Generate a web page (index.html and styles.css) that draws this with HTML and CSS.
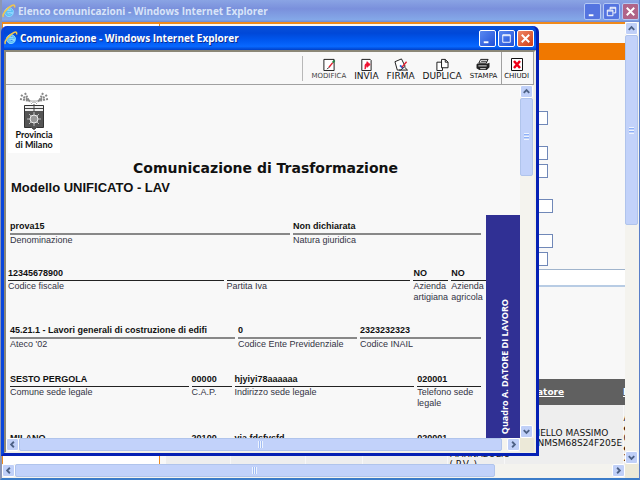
FILE: index.html
```
<!DOCTYPE html>
<html lang="it">

<head>
  <meta charset="utf-8">
  <title>Elenco comunicazioni</title>
  <link rel="stylesheet" href="styles.css">
</head>

<body>

  <!-- icone condivise -->
  <svg class="defs" width="0" height="0">
    <symbol id="ie" viewBox="0 0 14 14">
      <path d="M11.500 8.500H5.500a2 2 0 0 0 3.500 1h2.300A4.500 4.500 0 1 1 11.500 8.500M5.500 6.500h3.500a1.800 1.800 0 0 0-3.500 0" fill="#5cc0f5" stroke="#8ad6ff" stroke-width="1" fill-rule="evenodd"/>
      <path d="M1.500 13C-.5 11 5 3.500 10 1.500c2.500-1 3 0 2.500 2" fill="none" stroke="#f2c64a" stroke-width="1.500"/>
    </symbol>
    <symbol id="min" viewBox="0 0 16 16"><path d="M4 11h5v2H4z" fill="#fff"/></symbol>
    <symbol id="max" viewBox="0 0 16 16"><path d="M4 4h8v8H4zM4 5h8" fill="none" stroke="#fff"/></symbol>
    <symbol id="restore" viewBox="0 0 16 16"><path d="M6.500 6V3.500h6v6H10M6.500 4.500h6M3.500 6.500h6v6h-6zM3.500 7.500h6" fill="none" stroke="#fff"/></symbol>
    <symbol id="close" viewBox="0 0 16 16"><path d="M4 4l8 8M12 4l-8 8" stroke="#fff" stroke-width="2" fill="none"/></symbol>
    <symbol id="arrow" viewBox="0 0 12 12"><path d="M3 7.500l3-3 3 3" fill="none" stroke="#4d6185" stroke-width="2"/></symbol>
  </svg>

  <!-- finestra dietro -->
  <div class="window back">
    <div class="titlebar">
      <svg class="ie"><use href="#ie"/></svg>
      <span class="title">Elenco comunicazioni - Windows Internet Explorer</span>
      <button aria-label="Riduci"><svg><use href="#min"/></svg></button>
      <button aria-label="Ripristina"><svg><use href="#restore"/></svg></button>
      <button class="close" aria-label="Chiudi"><svg><use href="#close"/></svg></button>
    </div>
    <div class="scroller">
      <div class="view elenco">
        <div class="menu"></div>
        <div class="main">
          <div class="banda"></div>
          <form class="filtri">
            <div class="gruppo"><input type="text" aria-label="Codice"></div>
            <div class="gruppo">
              <input type="text" aria-label="Dal">
              <input type="text" aria-label="Al">
            </div>
            <div class="gruppo"><input class="lungo" type="text" aria-label="Nome"></div>
            <div class="gruppo">
              <input class="lungo" type="text" aria-label="Cognome">
              <input type="text" aria-label="Data">
            </div>
          </form>
          <div class="striscia"></div>
          <table>
            <tr>
              <th class="c1"></th>
              <th class="c2"></th>
              <th class="c3"></th>
              <th class="c4"></th>
              <th class="c5"></th>
              <th class="c6"><a href="#">atore</a></th>
              <th><a href="#">D</a></th>
            </tr>
            <tr>
              <td></td>
              <td></td>
              <td></td>
              <td></td>
              <td class="comune">MARNABOLIO<br>( P.V. )</td>
              <td class="lavoratore">IELLO MASSIMO<br>NMSM68S24F205E</td>
              <td class="date">A<br><b>e</b><br>0<br><b>e</b><br>2</td>
            </tr>
          </table>
        </div>
      </div>
      <div class="vbar">
        <button aria-label="Su"><svg><use href="#arrow"/></svg></button>
        <div class="thumb"><i></i></div>
        <button class="down" aria-label="Giù"><svg><use href="#arrow"/></svg></button>
      </div>
      <div class="hbar">
        <button class="left" aria-label="Sinistra"><svg><use href="#arrow"/></svg></button>
        <div class="thumb"><i></i></div>
        <button class="right" aria-label="Destra"><svg><use href="#arrow"/></svg></button>
      </div>
    </div>
  </div>

  <!-- finestra davanti -->
  <div class="window front">
    <div class="titlebar">
      <svg class="ie"><use href="#ie"/></svg>
      <span class="title">Comunicazione - Windows Internet Explorer</span>
      <button aria-label="Riduci"><svg><use href="#min"/></svg></button>
      <button aria-label="Ingrandisci"><svg><use href="#max"/></svg></button>
      <button class="close" aria-label="Chiudi"><svg><use href="#close"/></svg></button>
    </div>
    <div class="corpo">
      <div class="toolbar">
        <div class="azioni">
          <button class="scuro">
            <svg viewBox="0 0 16 14"><path d="M2.500 1.500h11v12h-11z" fill="#fff" stroke="#111"/><path d="M8 10l4-5" stroke="#e02030" stroke-width="1.500"/><path d="M12 5l2-2.500" stroke="#208040" stroke-width="2"/><path d="M6 12l2-2" stroke="#111"/></svg>
            MODIFICA
          </button>
          <button class="largo">
            <svg viewBox="0 0 16 14"><path d="M3.500 1.500h9l1 1v11h-10z" fill="#fff" stroke="#111"/><path d="M7 12V8q0-2 2-2V4l3.500 3L9 10V8q-1 0-1 1z" fill="#f01030" stroke="#f01030"/></svg>
            INVIA
          </button>
          <button class="largo">
            <svg viewBox="0 0 16 14"><path d="M1.500 4l7-3 4 8-5 4H4z" fill="#fff" stroke="#111"/><path d="M7 8l3 3" stroke="#2060d0" stroke-width="2"/><path d="M9 10l5-6" stroke="#e02030" stroke-width="1.500"/><path d="M6 13h9l-3-3" fill="none" stroke="#111"/></svg>
            FIRMA
          </button>
          <button class="largo">
            <svg viewBox="0 0 16 14"><path d="M2.500 4.500h6v9h-6z" fill="#fff" stroke="#111"/><path d="M7.500 1.500h4l3 3v6h-7z" fill="#fff" stroke="#111"/><path d="M11.500 1.500v3h3" fill="none" stroke="#111"/></svg>
            DUPLICA
          </button>
          <button>
            <svg viewBox="0 0 16 14"><path d="M5.500 1.500h8l-2 4h-8z" fill="#fff" stroke="#111"/><path d="M6 3.500h6" stroke="#111"/><path d="M2 6h11l2-1v5l-3 3H4L1 11V7z" fill="#222"/><path d="M3 8.500h9M5 11.500h6" stroke="#eee"/></svg>
            STAMPA
          </button>
        </div>
        <button class="chiudi">
          <svg viewBox="0 0 16 14"><path d="M2.500 1.500h11v12h-11z" fill="#fff" stroke="#111"/><path d="M5 4l6 7M11 4l-6 7" stroke="#f00018" stroke-width="2.500"/></svg>
          CHIUDI
        </button>
      </div>
      <div class="scroller">
        <div class="view documento">
          <div class="logo">
            <svg viewBox="0 0 32 38">
              <path d="M3 3l10 7M7 1l4 8M2 7l10 2M29 3l-10 7M25 1l-4 8M30 7l-10 2" stroke="#888" stroke-width="2" stroke-dasharray="2 1"/>
              <path d="M12 9h8M13 12q3-4 6 0" fill="none" stroke="#aaa"/>
              <path d="M6.500 13.500h19v22h-7l-2.500 2-2.500-2h-7z" fill="#555" stroke="#333"/>
              <path d="M7 14h18v5H7z" fill="#eee"/>
              <path d="M7 16.500h18M16 12v7" stroke="#444"/>
              <path d="M16 20v14M9 27h14M11 22l10 10M21 22l-10 10" stroke="#bbb"/>
              <circle cx="16" cy="27" r="4" fill="#999" stroke="#eee"/>
            </svg>
            Provincia<br>di Milano
          </div>
          <h1>Comunicazione di Trasformazione</h1>
          <h2>Modello UNIFICATO - LAV</h2>
          <div class="quadro">
            <div class="campi">
              <dl class="riga r1 grigia">
                <div><dt>Denominazione</dt><dd>prova15</dd></div>
                <div><dt>Natura giuridica</dt><dd>Non dichiarata</dd></div>
              </dl>
              <dl class="riga r2">
                <div><dt>Codice fiscale</dt><dd>12345678900</dd></div>
                <div><dt>Partita Iva</dt><dd></dd></div>
                <div><dt>Azienda artigiana</dt><dd>NO</dd></div>
                <div><dt>Azienda agricola</dt><dd>NO</dd></div>
              </dl>
              <dl class="riga r3 grigia">
                <div><dt>Ateco '02</dt><dd>45.21.1 - Lavori generali di costruzione di edifi</dd></div>
                <div><dt>Codice Ente Previdenziale</dt><dd>0</dd></div>
                <div><dt>Codice INAIL</dt><dd>2323232323</dd></div>
              </dl>
              <dl class="riga r4">
                <div><dt>Comune sede legale</dt><dd>SESTO PERGOLA</dd></div>
                <div><dt>C.A.P.</dt><dd>00000</dd></div>
                <div><dt>Indirizzo sede legale</dt><dd>hjyiyi78aaaaaa</dd></div>
                <div><dt>Telefono sede legale</dt><dd>020001</dd></div>
              </dl>
              <dl class="riga r4">
                <div><dt>Comune</dt><dd>MILANO</dd></div>
                <div><dt>C.A.P.</dt><dd>20100</dd></div>
                <div><dt>Indirizzo</dt><dd>via fdsfvsfd</dd></div>
                <div><dt>Telefono</dt><dd>020001</dd></div>
              </dl>
            </div>
            <div class="linguetta"><span>Quadro A. DATORE DI LAVORO</span></div>
          </div>
        </div>
        <div class="vbar">
          <button aria-label="Su"><svg><use href="#arrow"/></svg></button>
          <div class="thumb"><i></i></div>
          <button class="down" aria-label="Giù"><svg><use href="#arrow"/></svg></button>
        </div>
        <div class="hbar">
          <button class="left" aria-label="Sinistra"><svg><use href="#arrow"/></svg></button>
          <div class="thumb"><i></i></div>
          <button class="right" aria-label="Destra"><svg><use href="#arrow"/></svg></button>
        </div>
      </div>
    </div>
  </div>

</body>

</html>
```
FILE: styles.css
```
* {
  box-sizing: border-box;
}

body {
  margin: 0;
  height: 100vh;
  position: relative;
  overflow: hidden;
  font-family: "Liberation Sans", Arial, sans-serif;
  color: #111;
}

button {
  padding: 0;
  border: none;
  background: none;
  font: inherit;
  color: inherit;
}

svg {
  display: block;
}

.defs {
  position: absolute;
}

/* finestre */
.window {
  display: flex;
  flex-direction: column;
}

.back {
  height: 100%;
  border-left: 2px solid #8c96b4;
  border-right: 1px solid #5a7fc8;
  border-bottom: 2px solid #3c7cc8;
}

.front {
  position: absolute;
  left: 1px;
  top: 26px;
  right: 101px;
  bottom: 24px;
  border: 3px solid #0831d9;
  border-top: none;
  border-color: #0a46dc #0520b4 #0520b4 #0a46dc;
  border-radius: 6px 6px 0 0;
  background: #0831d9;
}

.titlebar {
  display: flex;
  align-items: center;
  gap: 2px;
  flex: none;
  font: bold 10px "Open Sans", "Noto Sans", sans-serif;
}

.back .titlebar {
  height: 22px;
  background: linear-gradient(#8aa4e4, #7a90dc 40%, #84a8e8 90%, #7088d0);
  color: #d8e4f8;
}

.front .titlebar {
  height: 24px;
  padding-right: 2px;
  background: linear-gradient(#0a50d8, #0048d8 30%, #0058f0 60%, #0868ff 85%, #0040c8);
  color: #fff;
  border-radius: 6px 6px 0 0;
}

.ie {
  width: 14px;
  height: 14px;
}

.title {
  flex: 1;
  white-space: nowrap;
}

.front .title {
  text-shadow: 1px 1px #0a2a90;
}

.titlebar button {
  width: 17px;
  height: 17px;
  border: 1px solid #fff;
  border-radius: 2px;
  background: linear-gradient(135deg, #5a88f0, #2050d8);
}

.titlebar button svg {
  width: 15px;
  height: 15px;
}

.titlebar .close {
  background: linear-gradient(135deg, #f08868, #d03c14);
}

.back .titlebar button {
  border-color: #b4c8f4;
  background: #5474e0;
}

.back .titlebar .close {
  background: #b06488;
}

.corpo {
  flex: 1;
  min-height: 0;
  display: flex;
  flex-direction: column;
  background: #f8f8f8;
  border: 2px solid #8c8878;
  border-right-color: #f0eee4;
  border-bottom: 1px solid #f0eee4;
}

/* barre di scorrimento */
.scroller {
  flex: 1;
  min-height: 0;
  display: grid;
  grid-template-columns: minmax(0, 1fr) 14px;
  grid-template-rows: minmax(0, 1fr) 14px;
  background: #ece9d8;
}

.view {
  overflow: hidden;
  background: #f8f8f8;
}

.vbar,
.hbar {
  display: flex;
  background: #f4f3ee;
}

.vbar {
  flex-direction: column;
}

.vbar button,
.hbar button {
  width: 13px;
  height: 13px;
  border: 1px solid #fff;
  border-radius: 2px;
  background: #c0d0f8;
}

.vbar svg,
.hbar svg {
  width: 11px;
  height: 11px;
}

.thumb {
  display: flex;
  align-items: center;
  justify-content: center;
  border: 1px solid #b0c4ec;
  border-radius: 2px;
  background: #c2d2fa;
}

.vbar .thumb {
  width: 13px;
  flex: 0 0 22%;
}

.back .vbar .thumb {
  flex-basis: 43%;
}

.hbar .thumb {
  height: 13px;
}

.back .hbar .thumb {
  flex: 0 0 77%;
}

.front .hbar .thumb {
  flex: 0 0 94%;
}

.thumb i {
  width: 5px;
  height: 7px;
  background: repeating-linear-gradient(#eef4fe 0 1px, #8cb0f8 1px 2px, #c2d2fa 2px 3px);
}

.hbar .thumb i {
  background: repeating-linear-gradient(90deg, #eef4fe 0 1px, #a0bcf4 1px 2px);
}

.down,
.right {
  flex: none;
}

.vbar .down {
  margin-top: auto;
}

.hbar .right {
  margin-left: auto;
}

.down svg {
  transform: rotate(180deg);
}

.left svg {
  transform: rotate(-90deg);
}

.right svg {
  transform: rotate(90deg);
}

/* elenco */
.elenco {
  display: flex;
  gap: 6px;
  border-top: 2px solid #f08a1c;
}

.menu {
  flex: 0 0 158px;
  background: #fff;
  border: 1px solid #f08a1c;
  border-width: 0 1px;
}

.main {
  flex: 1;
  min-width: 0;
}

.banda {
  height: 17px;
  margin-top: 19px;
  background: #f07800;
}

.filtri {
  display: flex;
  flex-direction: column;
  gap: 21px;
  padding: 51px 0 2px 282px;
}

.gruppo {
  display: flex;
  flex-direction: column;
  gap: 4px;
}

.filtri input {
  width: 100px;
  height: 14px;
  padding: 0;
  border: 1px solid #7088b8;
  background: #fff;
}

.filtri .lungo {
  width: 105px;
}

.striscia {
  height: 18px;
  margin: 1px 0 92px;
  background: #fff;
  border-top: 1px solid #a0b4cc;
  border-bottom: 2px solid #b8cce4;
}

table {
  width: 100%;
  table-layout: fixed;
  border-collapse: collapse;
  font: 9px/10px "DejaVu Sans", Verdana, sans-serif;
}

th {
  height: 26px;
  padding: 0;
  background: #606060;
  color: #fff;
  text-align: left;
}

th a {
  color: #fff;
}

.c1 {
  width: 64px;
}

.c2 {
  width: 75px;
}

.c3 {
  width: 57px;
}

.c4 {
  width: 85px;
}

.c5 {
  width: 57px;
}

.c6 {
  width: 119px;
  padding-left: 33px;
}

td {
  height: 66px;
  padding: 0 0 0 2px;
  background: #eee;
  border-right: 1px solid #f8f8f8;
  white-space: nowrap;
}

td:last-child {
  border-right: none;
}

.comune {
  padding-bottom: 2px;
  vertical-align: bottom;
}

.lavoratore {
  padding-left: 33px;
}

.date {
  padding: 0;
}

/* barra dei comandi */
.toolbar {
  flex: none;
  display: flex;
  height: 33px;
  border-bottom: 1px solid #a0a0a0;
  font: 7px/9px "DejaVu Sans", Verdana, sans-serif;
}

.azioni {
  flex: 1;
  display: flex;
  justify-content: flex-end;
  gap: 8px;
  padding: 4px 4px 3px 0;
}

.azioni::before {
  content: "";
  border-left: 1px solid #b8b8b8;
}

.toolbar button {
  display: flex;
  flex-direction: column;
  align-items: center;
  gap: 1px;
  padding-top: 2px;
}

.toolbar svg {
  width: 16px;
  height: 14px;
}

.toolbar .largo {
  font-size: 9px;
}

.toolbar .scuro {
  color: #444;
}

.toolbar .chiudi {
  padding: 5px 4px 0 2px;
  border-left: 1px solid #a0a0a0;
  border-right: 1px solid #a0a0a0;
}

/* documento */
.documento {
  padding-top: 5px;
}

.logo {
  width: 52px;
  height: 63px;
  margin-left: 2px;
  padding-top: 2px;
  background: #fff;
  font: bold 9px/10px Lato, "Noto Sans", sans-serif;
  text-align: center;
}

.logo svg {
  width: 32px;
  height: 38px;
  margin: 0 auto;
}

h1 {
  margin: 5px 0 0;
  padding-left: 5px;
  font: bold 14px/20px "DejaVu Sans", Verdana, sans-serif;
  text-align: center;
}

h2 {
  margin: 0 0 17px 5px;
  font-size: 13px;
  line-height: 20px;
}

.quadro {
  display: flex;
  font-size: 9px;
  line-height: 11px;
}

.campi {
  flex: 1;
  padding-top: 4px;
}

.riga {
  display: grid;
  gap: 3px;
  margin: 0 5px 20px 4px;
}

.r1 {
  grid-template-columns: 280fr 188fr;
}

.r2 {
  grid-template-columns: 217fr 185fr 35fr 35fr;
  margin: 0 0 20px 2px;
}

.r3 {
  grid-template-columns: 225fr 119fr 121fr;
  margin-bottom: 22px;
}

.r4 {
  grid-template-columns: 179fr 40fr 180fr 64fr;
  margin-bottom: 22px;
}

.riga div {
  display: flex;
  flex-direction: column-reverse;
  justify-content: flex-end;
  min-width: 0;
}

dt {
  color: #334;
}

dd {
  height: 15px;
  margin: 0;
  padding-top: 2px;
  border-bottom: 1px solid #222;
  font-weight: bold;
  white-space: nowrap;
}

.grigia dd {
  height: 16px;
  border-bottom: 2px solid #888;
}

.linguetta {
  flex: 0 0 34px;
  padding: 84px 0 0 4px;
  background: #303094;
  color: #fff;
  font: bold 9px/12px "Open Sans", "Noto Sans", sans-serif;
}

.linguetta span {
  display: block;
  margin: 0 auto;
  writing-mode: vertical-rl;
  transform: rotate(180deg);
  white-space: nowrap;
}
```
